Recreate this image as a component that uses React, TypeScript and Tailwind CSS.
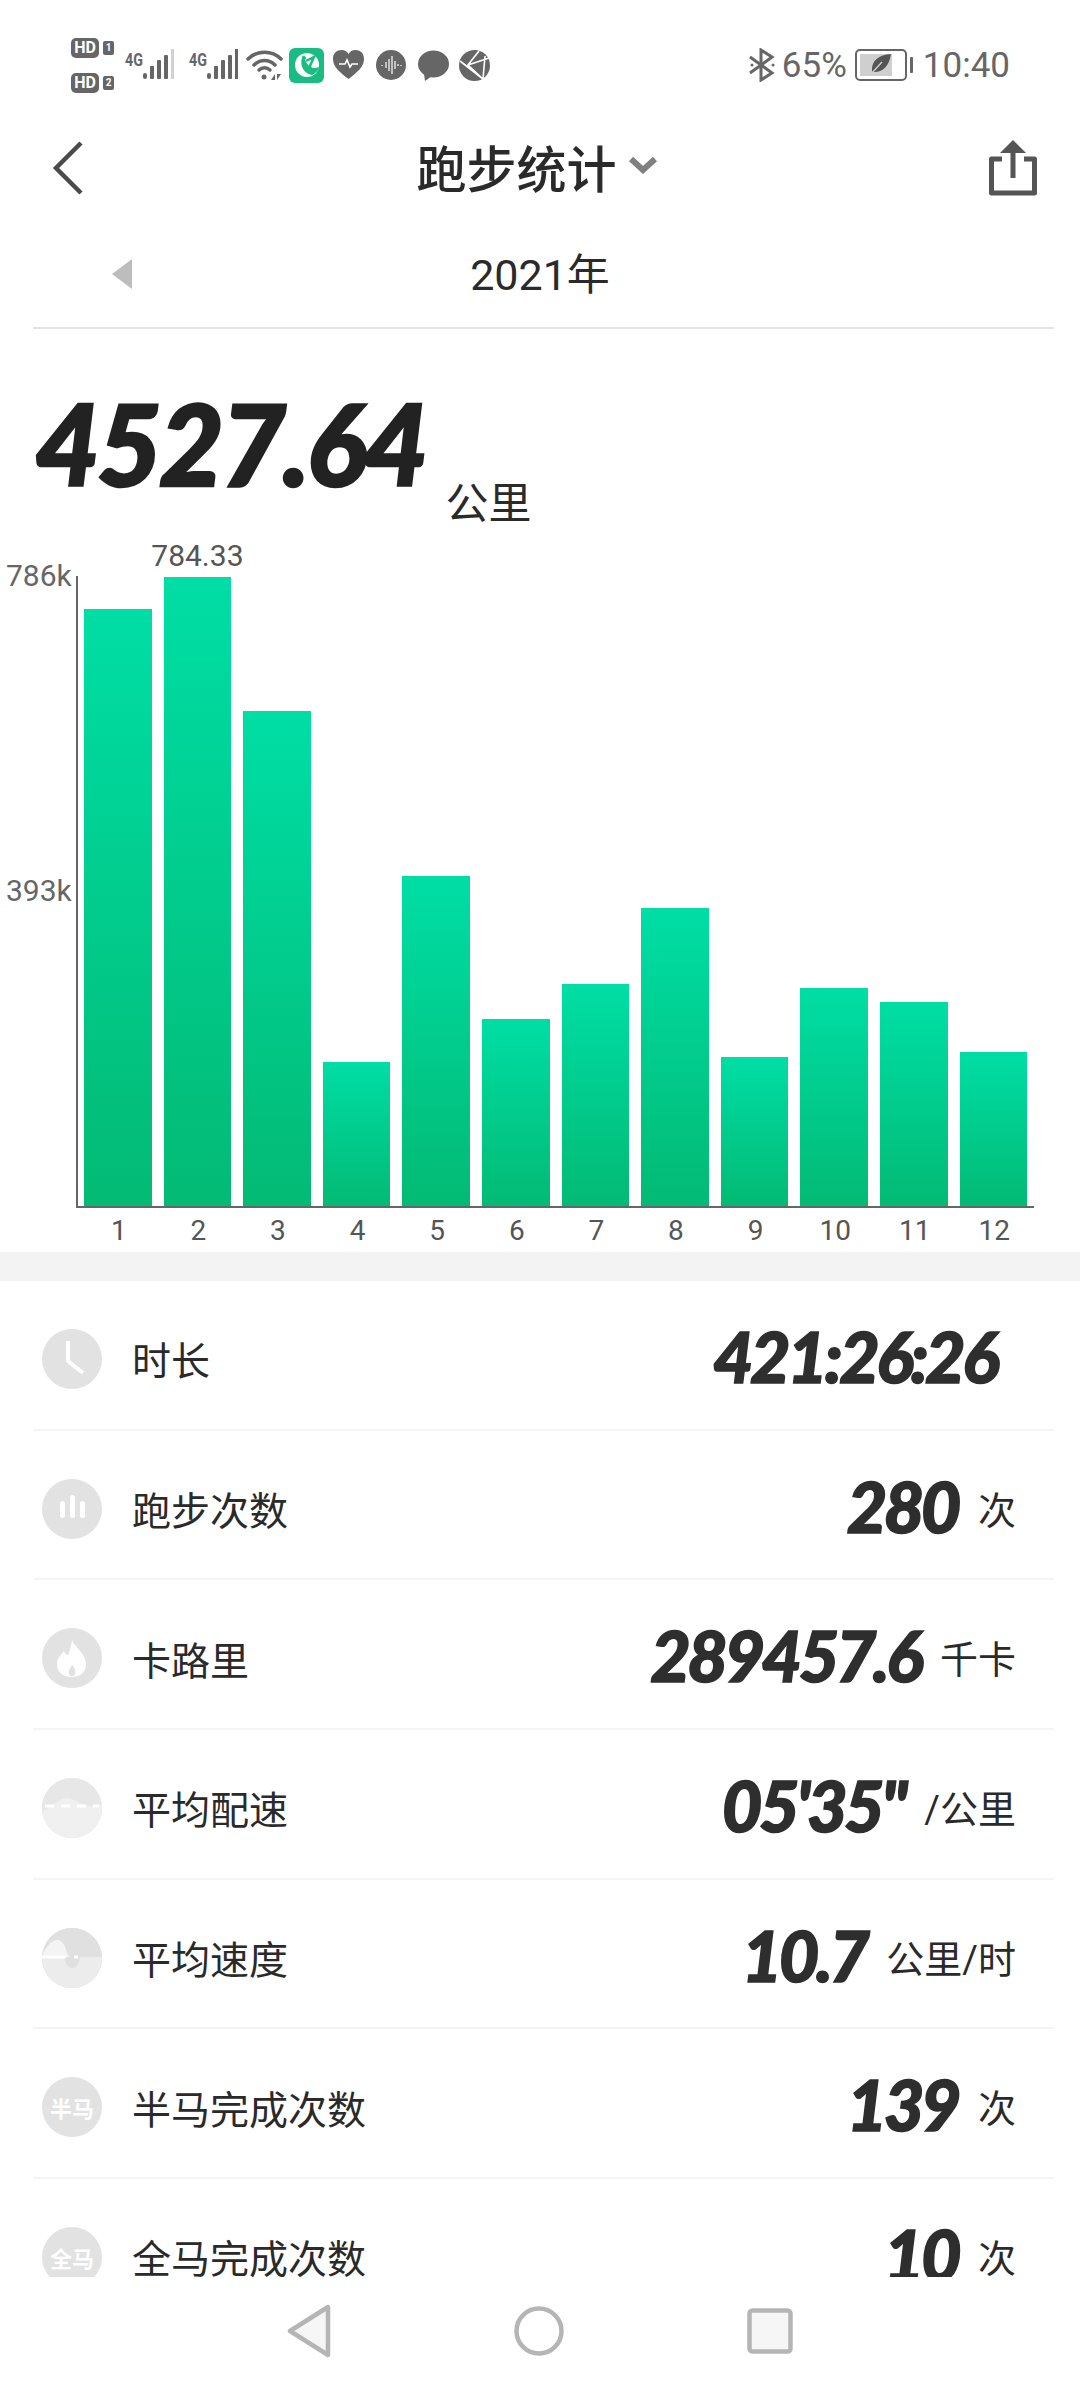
import type { ReactNode } from "react";

const MONTHS = [
    { m: 1, top: 609 }, { m: 2, top: 577, label: "784.33" }, { m: 3, top: 711 }, { m: 4, top: 1062 },
    { m: 5, top: 876 }, { m: 6, top: 1019 }, { m: 7, top: 984 }, { m: 8, top: 908 },
    { m: 9, top: 1057 }, { m: 10, top: 988 }, { m: 11, top: 1002 }, { m: 12, top: 1052 },
];
const AXIS_BOTTOM = 1206;

function Signal({ faded }: { faded?: boolean }) {
    return (
        <svg width="32" height="32" viewBox="0 0 32 32" className="-ml-px">
            <rect x="1" y="24" width="4" height="6" rx="2" fill="#666" />
            <rect x="8" y="17" width="4" height="13" rx="1" fill="#666" />
            <rect x="15" y="11" width="4" height="19" rx="1" fill="#666" />
            <rect x="22" y="6" width="4" height="24" rx="1" fill="#666" />
            <rect x="29" y="0" width="3" height="30" fill={faded ? "#d0d0d0" : "#666"} />
        </svg>
    );
}

function Net({ faded }: { faded?: boolean }) {
    return (
        <div className="flex items-end">
            <span className="mb-[12px] w-[18px] origin-left scale-x-75 text-[19px] font-bold leading-none text-[#666] [font-family:'Roboto',sans-serif]">4G</span>
            <Signal faded={faded} />
        </div>
    );
}

function HdBadge({ n }: { n: string }) {
    return (
        <div className="flex items-center gap-[4px]">
            <span className="flex h-[20px] w-[28px] items-center justify-center rounded-[5px] bg-[#666] text-[16px] font-bold leading-none text-white [font-family:'Roboto',sans-serif]">HD</span>
            <span className="flex h-[14px] w-[11px] items-center justify-center rounded-[2px] bg-[#666] text-[10px] font-bold leading-none text-white [font-family:'Roboto',sans-serif]">{n}</span>
        </div>
    );
}

function StatusBar() {
    return (
        <div className="flex h-[112px] items-center justify-between pl-[71px] pr-[70px] pt-[18px]">
            <div className="flex items-center">
                <div className="flex flex-col gap-[15px]">
                    <HdBadge n="1" />
                    <HdBadge n="2" />
                </div>
                <div className="ml-[11px] flex items-center gap-[15px]">
                    <Net faded />
                    <Net />
                </div>
                <svg width="38" height="32" viewBox="0 0 38 32" className="ml-[8px]" fill="none" stroke="#666" strokeWidth="3.5" strokeLinecap="round">
                    <path d="M2 10 C11 1 26 1 35 10" />
                    <path d="M8 16 C14 10 23 10 29 16" />
                    <path d="M13 21 C16 18 21 18 24 21" />
                    <circle cx="18" cy="28" r="2.5" fill="#666" stroke="none" />
                    <path d="M29 25 V31 L25 31Z M31 25 V31 L35 25Z" fill="#666" stroke="none" />
                </svg>
                <div className="ml-[5px] flex h-[35px] w-[35px] items-center justify-center rounded-[6px] bg-[#19bd82]">
                    <svg width="26" height="28" viewBox="0 0 26 28">
                        <circle cx="13" cy="14" r="12" fill="#fff" />
                        <path d="M9 4 C5 12 8 22 18 24 C22 22 24 20 25 16 C16 20 12 12 9 4Z" fill="#19bd82" />
                        <circle cx="10" cy="7" r="2" fill="#19bd82" />
                        <path d="M12 10 L20 6 L16 15 L17 20" stroke="#19bd82" strokeWidth="2.5" fill="none" />
                    </svg>
                </div>
                <svg width="31" height="30" viewBox="0 0 31 30" className="ml-[9px]">
                    <path d="M15.5 29 C5 21 0 16 0 9 C0 3 4 0 8.5 0 C11.5 0 14 1.5 15.5 4 C17 1.5 19.5 0 22.5 0 C27 0 31 3 31 9 C31 16 26 21 15.5 29Z" fill="#666" />
                    <path d="M6 14 H12 L14 10 L17 17 L19 14 H25" stroke="#fff" strokeWidth="1.6" fill="none" />
                </svg>
                <svg width="30" height="30" viewBox="0 0 30 30" className="ml-[12px]">
                    <circle cx="15" cy="15" r="15" fill="#666" />
                    <path d="M6 15v1M10 12v6M13 9v12M16 6v18M19 11v8M22 14v2M25 15v1" stroke="#fff" strokeWidth="1.2" />
                </svg>
                <svg width="31" height="31" viewBox="0 0 31 31" className="ml-[12px]">
                    <ellipse cx="15.5" cy="14" rx="15.5" ry="13.5" fill="#666" />
                    <path d="M6 24 L7 31 L14 26Z" fill="#666" />
                </svg>
                <svg width="31" height="31" viewBox="0 0 31 31" className="ml-[10px]">
                    <circle cx="15.5" cy="15.5" r="15.5" fill="#666" />
                    <path d="M1 11 L24 29 M20 1 L9 15 L24 29 M9 15 L30 8 M24 29 L26 6" stroke="#fff" strokeWidth="1.6" fill="none" />
                </svg>
            </div>
            <div className="flex items-center text-[35px] leading-none text-[#666] [font-family:'Roboto',sans-serif]">
                <svg width="28" height="34" viewBox="0 0 28 34" fill="none" stroke="#666" strokeWidth="3">
                    <path d="M2 9 L24 25 L13 32 V2 L24 9 L2 25" />
                    <circle cx="4" cy="17" r="1.5" fill="#666" stroke="none" />
                    <circle cx="25" cy="17" r="1.5" fill="#666" stroke="none" />
                </svg>
                <span className="ml-[6px]">65%</span>
                <div className="ml-[8px] flex items-center">
                    <div className="relative h-[32px] w-[52px] rounded-[5px] border-[2.5px] border-[#666] p-[3px]">
                        <div className="h-full w-[32px] bg-[#cfcfcf]" />
                        <svg width="22" height="20" viewBox="0 0 22 20" className="absolute left-[13px] top-[3px]">
                            <path d="M21 0 C9 1 1 6 2 18 C12 19 19 13 21 0Z" fill="#555" />
                            <path d="M1 20 L12 8" stroke="#cfcfcf" strokeWidth="1.4" />
                        </svg>
                    </div>
                    <div className="ml-[3px] h-[16px] w-[3px] rounded-[1px] bg-[#666]" />
                </div>
                <span className="ml-[10px]">10:40</span>
            </div>
        </div>
    );
}

function Header() {
    return (
        <div className="flex h-[112px] items-center justify-between pl-[52px] pr-[43px]">
            <svg width="32" height="54" viewBox="0 0 32 54" fill="none" stroke="#4a4a4a" strokeWidth="4.5">
                <path d="M29 2 L4 27 L29 52" />
            </svg>
            <div className="flex items-center gap-[12px]">
                <span className="-mt-[4px] text-[50px] font-medium leading-none text-[#2a2a2a] [font-family:'Noto_Sans_CJK_SC',sans-serif]">跑步统计</span>
                <svg width="28" height="18" viewBox="0 0 28 18" fill="none" stroke="#808080" strokeWidth="6" className="-mt-[6px]">
                    <path d="M2 3 L14 14 L26 3" />
                </svg>
            </div>
            <svg width="48" height="56" viewBox="0 0 48 56" fill="none" stroke="#555" strokeWidth="5">
                <path d="M13 19 H2.5 V53 H45.5 V19 H35" strokeLinejoin="round" />
                <path d="M24 38 V6" />
                <path d="M24 0 L37 13 H11Z" fill="#555" stroke="none" />
            </svg>
        </div>
    );
}

function YearRow() {
    return (
        <div className="relative ml-[33px] mr-[26px] flex h-[105px] items-center justify-center border-b-2 border-[#e4e4e4]">
            <svg width="20" height="30" viewBox="0 0 20 30" className="absolute left-[79px] top-[35px]">
                <path d="M20 0 V30 L0 15Z" fill="#bdbdbd" />
            </svg>
            <span className="pr-[7px] text-[43px] leading-none text-[#2a2a2a] [font-family:'Roboto','Noto_Sans_CJK_SC',sans-serif]">2021年</span>
        </div>
    );
}

function Chart() {
    return (
        <div className="mt-[77px] flex pl-[6px]">
            <div className="flex h-[630px] w-[70px] flex-col">
                {["786k", "393k"].map((t) => (
                    <div key={t} className="h-[315px]">
                        <span className="block -translate-y-1/2 text-[30px] leading-none text-[#666] [font-family:'Roboto',sans-serif]">{t}</span>
                    </div>
                ))}
            </div>
            <div>
                <div className="flex h-[632px] w-[958px] items-end gap-[12px] border-b-2 border-l-2 border-[#666] pl-[6px]">
                    {MONTHS.map((b) => (
                        <div
                            key={b.m}
                            className="relative w-[67.6px] bg-gradient-to-b from-[#00dea5] to-[#03ba74]"
                            style={{ height: AXIS_BOTTOM - b.top }}
                        >
                            {b.label && (
                                <span className="absolute bottom-full left-1/2 mb-[6px] -translate-x-1/2 text-[30px] leading-none text-[#555] [font-family:'Roboto',sans-serif]">{b.label}</span>
                            )}
                        </div>
                    ))}
                </div>
                <div className="mt-[9px] flex gap-[12px] pl-[9px]">
                    {MONTHS.map((b) => (
                        <span key={b.m} className="w-[67.6px] text-center text-[28px] leading-none text-[#555] [font-family:'Roboto',sans-serif]">{b.m}</span>
                    ))}
                </div>
            </div>
        </div>
    );
}

const ICONS: ReactNode[] = [
    <>
        <path d="M26 12 V32 L41 44" stroke="#fff" strokeWidth="4" fill="none" />
    </>,
    <>
        <rect x="18" y="22" width="5" height="17" rx="2.5" fill="#fff" />
        <rect x="28" y="16" width="5" height="23" rx="2.5" fill="#fff" />
        <rect x="38" y="22" width="5" height="17" rx="2.5" fill="#fff" />
    </>,
    <>
        <path d="M30 12 C33 20 44 25 44 36 C44 45 37 49 30 49 C22 49 15 45 15 36 C15 30 19 27 22 23 C23 26 25 27 26 27 C28 23 29 17 30 12Z" fill="#fff" />
        <path d="M30 37 C33 40 34 43 33 46 C32 49 28 49 27 46 C26 43 28 40 30 37Z" fill="#e2e2e2" />
    </>,
    <>
        <rect width="60" height="60" fill="#e7e7e7" />
        <path d="M0 34 C14 26 20 16 32 22 C44 28 50 30 60 26 V60 H0Z" fill="#f0f0f0" />
        <path d="M3 28 H57" stroke="#fff" strokeWidth="3" strokeDasharray="9 7" fill="none" />
    </>,
    <>
        <rect width="60" height="60" fill="#e0e0e0" />
        <path d="M0 29 C4 16 14 8 20 14 C24 18 24 26 28 29Z" fill="#f4f4f4" />
        <path d="M0 29 H22 C25 44 36 44 38 29 H60 V60 H0Z" fill="#ececec" />
        <path d="M0 29 H24 M32 29 H36" stroke="#fff" strokeWidth="3" fill="none" />
    </>,
];

type Stat = { icon?: number; badge?: string; label: string; value: string; unit?: string };

const STATS: Stat[] = [
    { icon: 0, label: "时长", value: "421:26:26" },
    { icon: 1, label: "跑步次数", value: "280", unit: "次" },
    { icon: 2, label: "卡路里", value: "289457.6", unit: "千卡" },
    { icon: 3, label: "平均配速", value: "05'35\"", unit: "/公里" },
    { icon: 4, label: "平均速度", value: "10.7", unit: "公里/时" },
    { badge: "半马", label: "半马完成次数", value: "139", unit: "次" },
    { badge: "全马", label: "全马完成次数", value: "10", unit: "次" },
];

function StatRow({ s }: { s: Stat }) {
    return (
        <div className="ml-[33px] mr-[26px] flex h-[149.7px] shrink-0 items-center border-b-2 border-[#f4f4f4] pl-[9px] pr-[38px] pt-[8px]">
            <div className="flex h-[60px] w-[60px] items-center justify-center overflow-hidden rounded-full bg-[#e2e2e2]">
                {s.badge ? (
                    <span className="text-[22px] font-bold leading-none text-white [font-family:'Noto_Sans_CJK_SC',sans-serif]">{s.badge}</span>
                ) : (
                    <svg width="60" height="60" viewBox="0 0 60 60">{ICONS[s.icon ?? 0]}</svg>
                )}
            </div>
            <span className="ml-[30px] text-[39px] leading-none text-[#2a2a2a] [font-family:'Noto_Sans_CJK_SC',sans-serif]">{s.label}</span>
            <div className="ml-auto flex items-center">
                <span className={`-mt-[6px] text-[70px] font-black italic leading-none tracking-[-3.5px] text-[#2e2e2e] [-webkit-text-stroke:1.5px_#2e2e2e] [font-family:'Lato',sans-serif] ${s.unit ? "" : "mr-[20px]"}`}>{s.value}</span>
                {s.unit && <span className="ml-[20px] mt-[4px] text-[38px] leading-none text-[#2a2a2a] [font-family:'Roboto','Noto_Sans_CJK_SC',sans-serif]">{s.unit}</span>}
            </div>
        </div>
    );
}

export default function App() {
    return (
        <div className="flex h-[2388px] w-[1080px] flex-col overflow-hidden bg-white">
            <div className="flex-1 overflow-hidden">
                <StatusBar />
                <Header />
                <YearRow />
                <div className="mt-[58px] flex items-end pl-[35px]">
                    <span className="text-[112px] font-black italic leading-none tracking-[-3px] text-[#222] [-webkit-text-stroke:2.5px_#222] [font-family:'Lato',sans-serif]">4527.64</span>
                    <span className="-mb-[23px] ml-[20px] text-[43px] leading-none text-[#2a2a2a] [font-family:'Noto_Sans_CJK_SC',sans-serif]">公里</span>
                </div>
                <Chart />
                <div className="mt-[7px] h-[29px] bg-[#f3f3f3]" />
                {STATS.map((s) => (
                    <StatRow key={s.label} s={s} />
                ))}
            </div>
            <div className="flex h-[111px] items-center justify-center gap-[183px] pb-[4px]">
                <svg width="44" height="54" viewBox="0 0 44 54" fill="#f6f6f6" stroke="#b5b5b5" strokeWidth="4.5" strokeLinejoin="round">
                    <path d="M41 3 V51 L3 27Z" />
                </svg>
                <svg width="50" height="50" viewBox="0 0 50 50" fill="none" stroke="#b5b5b5" strokeWidth="4.5">
                    <circle cx="25" cy="25" r="22.5" />
                </svg>
                <svg width="46" height="46" viewBox="0 0 46 46" fill="#f6f6f6" stroke="#b5b5b5" strokeWidth="4.5">
                    <rect x="2.5" y="2.5" width="41" height="41" rx="3" />
                </svg>
            </div>
        </div>
    );
}
